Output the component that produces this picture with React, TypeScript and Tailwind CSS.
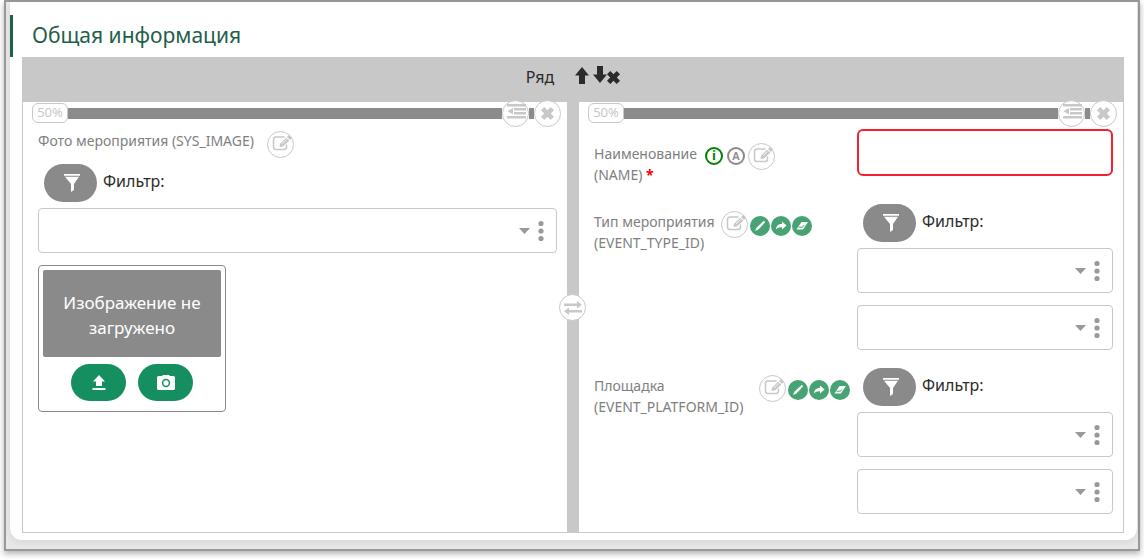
import { useId, type ReactNode } from 'react';

type IconProps = { className?: string };

const ArrowUpIcon = ({ className = '' }: IconProps) => (
  <svg viewBox="0 0 14 17" className={className} fill="currentColor" aria-hidden="true">
    <path d="M7 0 14 8.500H10V17H4V8.500H0z" />
  </svg>
);

const CrossIcon = ({ className = '' }: IconProps) => (
  <svg viewBox="0 0 13 13" className={className} fill="currentColor" aria-hidden="true">
    <path d="M3.300 0 6.500 3.200 9.700 0 13 3.300 9.800 6.500 13 9.700 9.700 13 6.500 9.800 3.300 13 0 9.700 3.200 6.500 0 3.300z" />
  </svg>
);

const IndentIcon = ({ className = '' }: IconProps) => (
  <svg viewBox="0 0 19 15" className={className} fill="currentColor" aria-hidden="true">
    <path d="M0 0h19v2.500H0zM7 4h12v2.500H7zM7 8h12v2.500H7zM0 12h19v2.500H0zM6 4v6.500L.5 7.200z" />
  </svg>
);

const SwapIcon = ({ className = '' }: IconProps) => (
  <svg viewBox="0 0 18 14" className={className} fill="currentColor" aria-hidden="true">
    <path d="M0 2.500h13V0l5 3.800-5 3.700V5H0zM18 11.500H5V14L0 10.200l5-3.700V9h13z" />
  </svg>
);

const EditIcon = ({ className = '' }: IconProps) => (
  <svg viewBox="0 0 20 16" className={className} aria-hidden="true">
    <path
      d="M12.500 2H4Q1.500 2 1.500 4.500v7.500Q1.500 14.500 4 14.500h8Q14.500 14.500 14.500 12V9.500"
      fill="none"
      stroke="currentColor"
      strokeWidth="1.500"
    />
    <path d="M14.200 2.700 17.300 5.800 10.800 11.600 7.500 12 8 8.700zM15 2 16.800.3Q17.300-.1 17.800.3L19.700 2.200Q20.100 2.700 19.700 3.200L18 5z" fill="currentColor" />
    <path d="M10 8.800 14.500 4.600" stroke="#fff" strokeWidth=".8" />
  </svg>
);

const FunnelIcon = ({ className = '' }: IconProps) => (
  <svg viewBox="0 0 16 18" className={className} fill="currentColor" aria-hidden="true">
    <path d="M0 0h16v1.800H0zM1 2.800h14L10 10v6l-3 2v-8z" />
  </svg>
);

const UploadIcon = ({ className = '' }: IconProps) => (
  <svg viewBox="0 0 14 15" className={className} fill="currentColor" aria-hidden="true">
    <path d="M7 0 13 6.500H10v4.500H4V6.500H1zM.5 13h13v2H.5z" />
  </svg>
);

const CameraIcon = ({ className = '' }: IconProps) => (
  <svg viewBox="0 0 18 15" className={className} aria-hidden="true">
    <path fill="currentColor" d="M5.500 0h7v1H16.500Q18 1 18 2.500v11Q18 15 16.500 15h-15Q0 15 0 13.500v-11Q0 1 1.500 1h4z" />
    <circle cx="9" cy="8" r="3.400" fill="none" stroke="#168f60" strokeWidth="1.500" />
  </svg>
);

const PencilIcon = ({ className = '' }: IconProps) => (
  <svg viewBox="0 0 12 12" className={className} fill="currentColor" aria-hidden="true">
    <path d="M9.800.8 11.200 2.200 4.400 9.400 1 11 2.400 7.800z" />
  </svg>
);

const ShareIcon = ({ className = '' }: IconProps) => (
  <svg viewBox="0 0 12 12" className={className} fill="currentColor" aria-hidden="true">
    <path d="M7 1.500 11.500 5.500 7 9.500V7.200C4.500 7 2.500 7.600.8 9.500 1.200 6 3.500 4 7 3.800z" />
  </svg>
);

const EraserIcon = ({ className = '' }: IconProps) => (
  <svg viewBox="0 0 12 12" className={className} aria-hidden="true">
    <path fill="currentColor" d="M5.500 2H12L7 9.500H.5z" />
    <path fill="none" stroke="#48a374" d="M2.500 7.200h4l1.500-2" />
  </svg>
);

function RoundButton({ label, children }: { label: string; children: ReactNode }) {
  return (
    <button
      type="button"
      aria-label={label}
      className="flex size-[27px] shrink-0 cursor-pointer items-center justify-center rounded-full border border-[#c8c8c8] bg-white text-[#c8c8c8]"
    >
      {children}
    </button>
  );
}

function EditButton() {
  return (
    <RoundButton label="Редактировать поле">
      <EditIcon className="mb-[3px] ml-[3px] h-4 w-5 shrink-0" />
    </RoundButton>
  );
}

function ActionButton({ label, children }: { label: string; children: ReactNode }) {
  return (
    <button
      type="button"
      aria-label={label}
      className="flex size-5 shrink-0 cursor-pointer items-center justify-center rounded-full bg-[#48a374] text-white"
    >
      {children}
    </button>
  );
}

function ReferenceActions() {
  return (
    <div className="mt-[5px] ml-0.5 flex gap-px">
      <ActionButton label="Изменить">
        <PencilIcon className="size-3" />
      </ActionButton>
      <ActionButton label="Перейти">
        <ShareIcon className="size-3" />
      </ActionButton>
      <ActionButton label="Очистить">
        <EraserIcon className="size-3" />
      </ActionButton>
    </div>
  );
}

function ColumnToolbar() {
  return (
    <div className="flex h-[22px] items-center pr-[6px] pl-[9px]">
      <span className="flex h-5 w-9 items-center justify-center rounded-md border border-[#c8c8c8] bg-white text-[13px] text-[#c8c8c8]">
        50%
      </span>
      <div className="h-[11px] flex-1 bg-[#8b8b8b]" />
      <RoundButton label="Сдвинуть колонку">
        <IndentIcon className="mb-[3px] ml-0.5 h-[15px] w-[19px]" />
      </RoundButton>
      <div className="h-[11px] w-[5px] bg-[#8b8b8b]" />
      <RoundButton label="Удалить колонку">
        <CrossIcon className="size-[13px]" />
      </RoundButton>
    </div>
  );
}

function FilterRow() {
  return (
    <div className="flex gap-[6px] pl-[6px]">
      <button
        type="button"
        aria-label="Открыть фильтр"
        className="flex h-[38px] w-[53px] cursor-pointer items-center justify-center rounded-full bg-[#8a8a8b] pl-0.5 text-white"
      >
        <FunnelIcon className="h-[18px] w-4" />
      </button>
      <span className="pt-[5px] text-base leading-6 text-[#2b2b2b]">Фильтр:</span>
    </div>
  );
}

function SelectBox({ id, label }: { id?: string; label?: string }) {
  return (
    <div className="flex h-[45px] items-center rounded border border-[#c8c8c8] bg-white pr-3">
      <select id={id} aria-label={label} className="h-full min-w-0 flex-1 appearance-none bg-transparent px-3 outline-none">
        <option value="" />
      </select>
      <svg viewBox="0 0 11 6" className="mr-2 h-[6px] w-[11px] text-[#999]" fill="currentColor" aria-hidden="true">
        <path d="M0 0h11L5.500 6z" />
      </svg>
      <button type="button" aria-label="Ещё" className="cursor-pointer text-[#999]">
        <svg viewBox="0 0 6 22" className="h-[22px] w-[6px]" fill="currentColor" aria-hidden="true">
          <circle cx="3" cy="3.500" r="2.600" />
          <circle cx="3" cy="11" r="2.600" />
          <circle cx="3" cy="18.500" r="2.600" />
        </svg>
      </button>
    </div>
  );
}

function PhotoField() {
  const id = useId();

  return (
    <div className="pt-[7px] pr-[10px] pl-[15px]">
      <div className="flex gap-[6px]">
        <label htmlFor={id} className="w-[223px] text-sm leading-5 text-[#808080]">
          Фото мероприятия (SYS_IMAGE)
        </label>
        <EditButton />
      </div>
      <div className="my-[6px]">
        <FilterRow />
      </div>
      <SelectBox id={id} />
      <div className="mt-3 w-[188px] rounded border border-[#8a8a8b] p-1 pb-[10px]">
        <p className="flex h-[87px] items-center justify-center rounded-xs bg-[#8a8a8b] px-4 pt-0.5 text-center text-[17px] leading-[25px] text-white">
          Изображение не загружено
        </p>
        <div className="mt-[7px] flex justify-center gap-3">
          <button
            type="button"
            aria-label="Загрузить файл"
            className="flex h-[37px] w-[55px] cursor-pointer items-center justify-center rounded-full bg-[#168f60] text-white"
          >
            <UploadIcon className="h-[15px] w-[14px]" />
          </button>
          <button
            type="button"
            aria-label="Сделать снимок"
            className="flex h-[37px] w-[55px] cursor-pointer items-center justify-center rounded-full bg-[#168f60] text-white"
          >
            <CameraIcon className="h-[15px] w-[18px]" />
          </button>
        </div>
      </div>
    </div>
  );
}

type ReferenceFieldProps = { title: string; code: string; labelWidth: string };

function ReferenceField({ title, code, labelWidth }: ReferenceFieldProps) {
  const id = useId();

  return (
    <div className="grid grid-cols-[263fr_256fr]">
      <div className="flex items-start gap-[6px] pt-[7px]">
        <label htmlFor={id} className={`${labelWidth} text-sm leading-[21px] text-[#808080]`}>
          {title}
          <br />
          {code}
        </label>
        <div className="flex">
          <EditButton />
          <ReferenceActions />
        </div>
      </div>
      <div className="flex min-w-0 flex-col">
        <div className="mb-[6px]">
          <FilterRow />
        </div>
        <SelectBox id={id} />
        <div className="mt-3">
          <SelectBox label={title} />
        </div>
      </div>
    </div>
  );
}

function NameField() {
  const id = useId();

  return (
    <div className="grid grid-cols-[263fr_256fr]">
      <div className="flex items-start pt-[14px]">
        <label htmlFor={id} className="text-sm leading-[21px] text-[#808080]">
          Наименование
          <br />
          (NAME) <span className="font-bold text-[#f00]">*</span>
        </label>
        <span className="mt-1 ml-2 flex size-[18px] items-center justify-center rounded-full border-2 border-[#008000] text-[13px] font-bold text-[#008000]">
          i
        </span>
        <span className="mt-1 ml-1 flex size-[18px] items-center justify-center rounded-full border-2 border-[#8a8a8b] text-[11px] font-semibold text-[#8a8a8b]">
          A
        </span>
        <div className="ml-[3px]">
          <EditButton />
        </div>
      </div>
      <input id={id} type="text" required className="h-[47px] min-w-0 rounded-md border-2 border-[#f3202f] px-3 outline-none" />
    </div>
  );
}

export default function App() {
  return (
    <div className="bg-white px-1 pb-2 font-['Noto_Sans','Open_Sans',sans-serif]">
      <main className="border-2 border-[#999] bg-[#e8e8e8] pr-px pb-[9px] pl-1 shadow-[0_3px_6px_rgba(0,0,0,0.3)]">
        <section className="rounded-b-xl bg-white pt-[13px] pb-[7px] shadow-[0_2px_8px_rgba(0,0,0,0.08)]">
          <h1 className="border-l-3 border-[#1f5f49] pb-0.5 pl-[19px] text-[21px] leading-10 text-[#1f5f49]">
            Общая информация
          </h1>

          <div className="mr-[13px] ml-3 border border-[#c8c8c8]">
            {/* Заголовок ряда */}
            <div className="flex h-11 justify-center bg-[#c8c8c8] pt-[7px] text-[#2b2b2b]">
              <span className="mr-[21px] text-base leading-6">Ряд</span>
              <div className="flex items-start">
                <button type="button" aria-label="Ряд вверх" className="cursor-pointer">
                  <ArrowUpIcon className="mt-0.5 h-[17px] w-[14px]" />
                </button>
                <button type="button" aria-label="Ряд вниз" className="ml-1 cursor-pointer">
                  <ArrowUpIcon className="mt-px h-[17px] w-[14px] rotate-180" />
                </button>
                <button type="button" aria-label="Удалить ряд" className="mt-[6px] cursor-pointer">
                  <CrossIcon className="size-[13px]" />
                </button>
              </div>
            </div>

            <div className="flex">
              <div className="min-w-0 flex-1">
                <ColumnToolbar />
                <PhotoField />
              </div>

              <div className="relative w-3 shrink-0 bg-[#c8c8c8]">
                <div className="absolute top-48 -left-2">
                  <RoundButton label="Поменять колонки местами">
                    <SwapIcon className="h-[14px] w-[18px]" />
                  </RoundButton>
                </div>
              </div>

              <div className="min-w-0 flex-1 pb-[18px]">
                <ColumnToolbar />
                <div className="flex flex-col gap-[18px] pt-[5px] pr-[10px] pl-[15px]">
                  <div className="mb-px">
                    <NameField />
                  </div>
                  <ReferenceField title="Тип мероприятия" code="(EVENT_TYPE_ID)" labelWidth="w-[121px]" />
                  <ReferenceField title="Площадка" code="(EVENT_PLATFORM_ID)" labelWidth="w-[159px]" />
                </div>
              </div>
            </div>
          </div>
        </section>
      </main>
    </div>
  );
}
